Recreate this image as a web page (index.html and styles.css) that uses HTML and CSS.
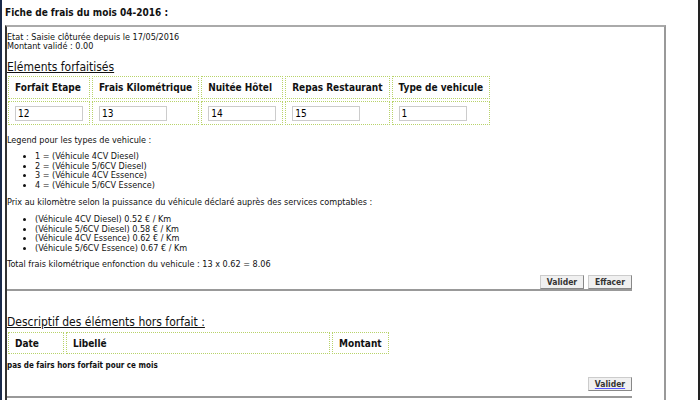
FILE: index.html
```html
<!DOCTYPE html>
<html lang="fr">
<head>
<meta charset="utf-8">
<title>Fiche de frais</title>
<link rel="stylesheet" href="styles.css">
</head>
<body>
<div class="page">
  <h2 class="title">Fiche de frais du mois 04-2016 :</h2>
  <div class="frame">
    <div class="section">
      <p class="info">Etat : Saisie clôturée depuis le 17/05/2016<br>Montant validé : 0.00</p>
      <h3 class="heading">Eléments forfaitisés</h3>
      <table class="grid">
        <tr>
          <th>Forfait Etape</th>
          <th>Frais Kilométrique</th>
          <th>Nuitée Hôtel</th>
          <th>Repas Restaurant</th>
          <th>Type de vehicule</th>
        </tr>
        <tr>
          <td><input class="field" type="text" value="12"></td>
          <td><input class="field" type="text" value="13"></td>
          <td><input class="field" type="text" value="14"></td>
          <td><input class="field" type="text" value="15"></td>
          <td><input class="field" type="text" value="1"></td>
        </tr>
      </table>
      <p class="text">Legend pour les types de vehicule :</p>
      <ul class="list">
        <li>1 = (Véhicule 4CV Diesel)</li>
        <li>2 = (Véhicule 5/6CV Diesel)</li>
        <li>3 = (Véhicule 4CV Essence)</li>
        <li>4 = (Véhicule 5/6CV Essence)</li>
      </ul>
      <p class="text prix">Prix au kilomètre selon la puissance du véhicule déclaré auprès des services comptables :</p>
      <ul class="list">
        <li>(Véhicule 4CV Diesel) 0.52 € / Km</li>
        <li>(Véhicule 5/6CV Diesel) 0.58 € / Km</li>
        <li>(Véhicule 4CV Essence) 0.62 € / Km</li>
        <li>(Véhicule 5/6CV Essence) 0.67 € / Km</li>
      </ul>
      <p class="text total">Total frais kilométrique enfonction du vehicule : 13 x 0.62 = 8.06</p>
      <div class="actions">
        <button class="btn" type="button">Valider</button>
        <button class="btn" type="button">Effacer</button>
      </div>
    </div>
    <div class="section second">
      <h3 class="heading">Descriptif des éléments hors forfait :</h3>
      <table class="grid">
        <tr>
          <th class="c-date">Date</th>
          <th class="c-lib">Libellé</th>
          <th>Montant</th>
        </tr>
      </table>
      <p class="empty">pas de fairs hors forfait pour ce mois</p>
      <div class="actions">
        <button class="btn link" type="button">Valider</button>
      </div>
    </div>
  </div>
</div>
</body>
</html>
```

FILE: styles.css
```css
html, body {
  margin: 0;
  padding: 0;
  background: #fff;
}
body {
  font-family: "DejaVu Sans Condensed", "DejaVu Sans", sans-serif;
  color: #111;
}
.page {
  width: 696px;
  height: 400px;
  border-left: 2px solid #1a2a4a;
  border-right: 2px solid #222;
  overflow: hidden;
}
.title {
  font-size: 10px;
  font-weight: bold;
  margin: 0;
  padding: 7px 0 0 3px;
  height: 18px;
  line-height: 12px;
}
.frame {
  margin-left: 3px;
  width: 657px;
  height: 400px;
  border-top: 2px solid #aaa;
  border-left: 2px solid #333;
  border-right: 2px solid #999;
}
.section {
  width: 625px;
  border-bottom: 2px solid #999;
  padding-top: 6px;
}
.second {
  padding-top: 24px;
  padding-bottom: 5px;
}
.info {
  font-size: 9px;
  line-height: 9px;
  margin: 0;
}
.heading {
  font-size: 12px;
  font-weight: normal;
  text-decoration: underline;
  margin: 9px 0 0;
  line-height: 14px;
}
.second .heading {
  margin: 0 0 1px;
}
.grid {
  border-collapse: separate;
  border-spacing: 2px;
  margin-left: -1px;
}
.grid th, .grid td {
  border: 1px dotted #b8d36a;
  text-align: left;
  padding: 0 6px;
}
.grid th {
  font-size: 10px;
  font-weight: bold;
  height: 21px;
}
.grid td {
  height: 22px;
}
.second .grid th {
  height: 20px;
}
.field {
  width: 62px;
  height: 11px;
  border: 1px solid #ccc;
  font-family: inherit;
  font-size: 10px;
  padding: 1px 2px;
  margin: 0;
  display: block;
}
.c-date { width: 42px; }
.c-lib { width: 250px; }
.text {
  font-size: 9px;
  margin: 8px 0 7px;
  line-height: 10px;
}
.prix {
  margin: 7px 0 8px;
}
.total {
  margin: 6px 0 6px;
}
.list {
  font-size: 9px;
  line-height: 9.5px;
  margin: 0;
  padding-left: 28px;
}
.actions {
  display: flex;
  justify-content: flex-end;
  gap: 4px;
}
.btn {
  font-family: inherit;
  font-size: 8.5px;
  font-weight: bold;
  color: #333;
  background: #f0f0f0;
  border: 1px solid #ccc;
  border-right-color: #888;
  border-bottom-color: #888;
  width: 44px;
  height: 14px;
  padding: 0;
  line-height: 12px;
}
.link {
  text-decoration: underline;
  text-decoration-color: #55f;
}
.empty {
  font-size: 8px;
  font-weight: bold;
  line-height: 10px;
  margin: 5px 0 6px;
}
```
